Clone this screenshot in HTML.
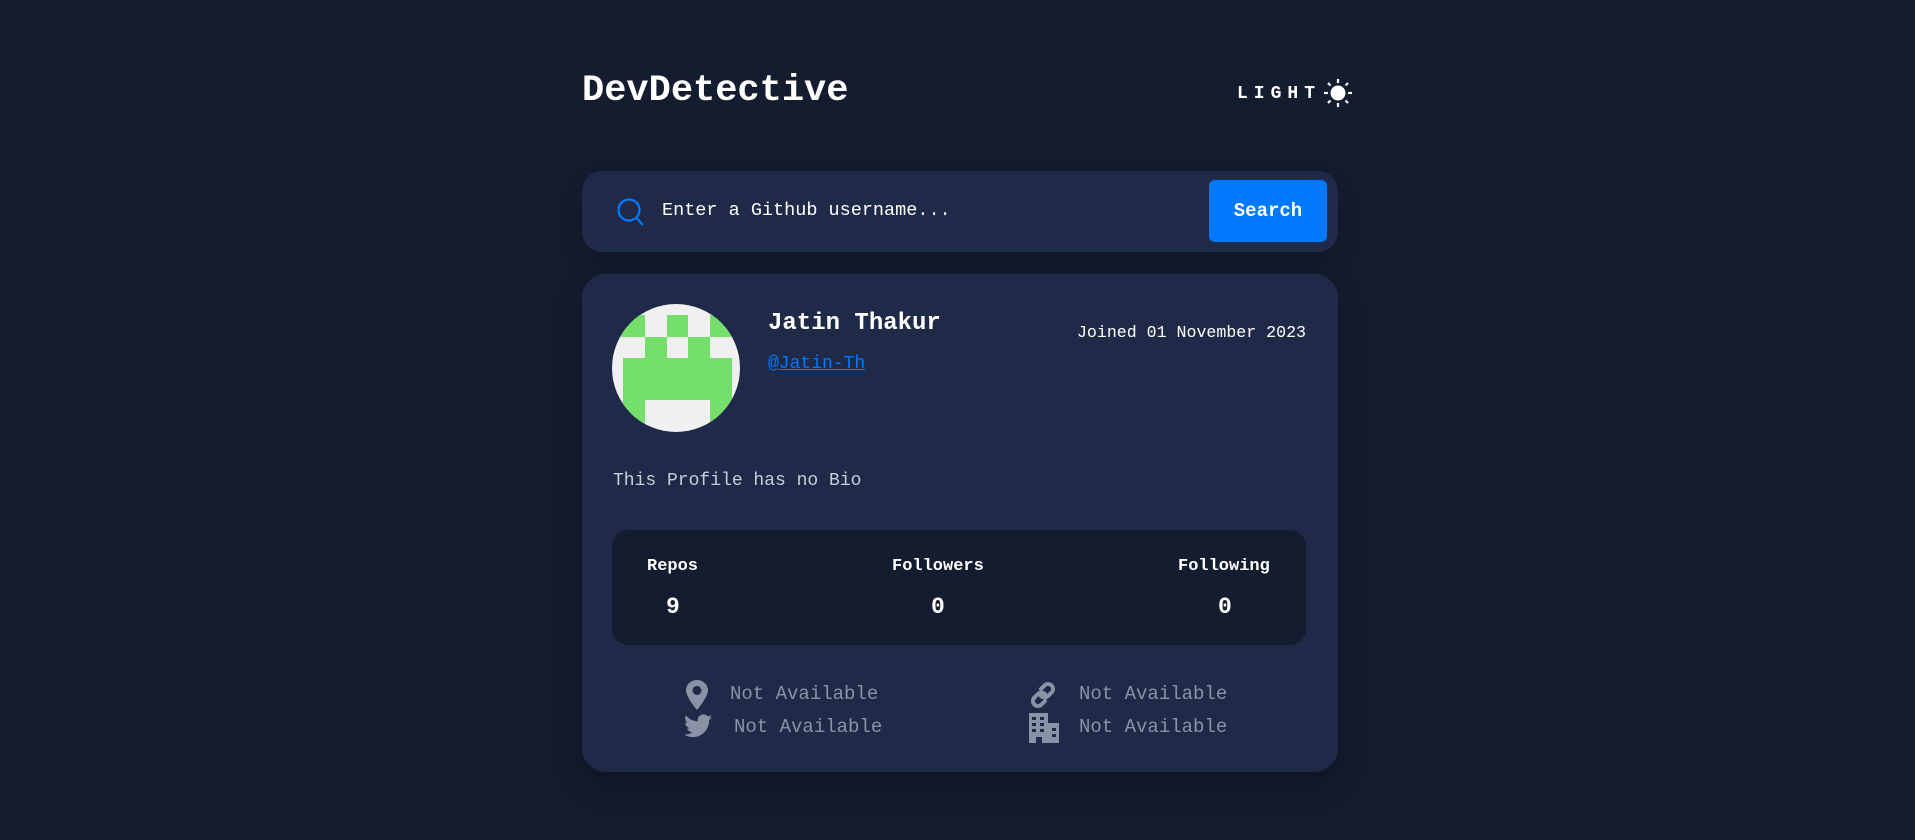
<!DOCTYPE html>
<html><head><meta charset="utf-8"><style>
*{margin:0;padding:0;box-sizing:border-box}
body{width:1915px;height:840px;background:#141c2f;font-family:"Liberation Mono",monospace;color:#fff;position:relative;overflow:hidden}
.a{position:absolute;white-space:nowrap}
.title{left:582px;top:70px;font-size:37px;font-weight:bold}
.light{left:1237px;top:84px;font-size:18px;font-weight:bold;letter-spacing:6px}
.search{left:582px;top:171px;width:756px;height:81px;background:#1f2a48;border-radius:20px;box-shadow:0 12px 25px rgba(0,0,0,.2)}
.btn{left:1209px;top:180px;width:118px;height:62px;background:#0079ff;border-radius:6px;font-weight:bold;font-size:19px;line-height:62px;text-align:center}
.card{left:582px;top:274px;width:756px;height:498px;background:#1f2a48;border-radius:24px;box-shadow:0 15px 30px rgba(0,0,0,.25)}
.stats{left:612px;top:530px;width:694px;height:115px;background:#141c2f;border-radius:16px}
.lbl{font-size:17px;font-weight:bold}
.num{font-size:23px;font-weight:bold}
.na{font-size:19px;color:#8a92a6}
</style></head><body>
<div class="a title">DevDetective</div>
<div class="a light">LIGHT</div>
<svg class="a" style="left:1323px;top:78px" width="30" height="30" viewBox="0 0 30 30"><circle cx="15" cy="15" r="7.5" fill="#fff"/><g stroke="#fff" stroke-width="2.2"><line x1="15" y1="1" x2="15" y2="5"/><line x1="15" y1="25" x2="15" y2="29"/><line x1="1" y1="15" x2="5" y2="15"/><line x1="25" y1="15" x2="29" y2="15"/><line x1="5" y1="5" x2="7.5" y2="7.5"/><line x1="22.5" y1="22.5" x2="25" y2="25"/><line x1="25" y1="5" x2="22.5" y2="7.5"/><line x1="5" y1="25" x2="7.5" y2="22.5"/></g></svg>
<div class="a search"></div>
<svg class="a" style="left:616px;top:197px" width="30" height="30" viewBox="0 0 30 30"><circle cx="13" cy="13" r="10.5" fill="none" stroke="#0079ff" stroke-width="2.2"/><line x1="20.5" y1="21" x2="27" y2="28" stroke="#0079ff" stroke-width="2.2"/></svg>
<div class="a" style="left:662px;top:200px;font-size:18.5px">Enter a Github username...</div>
<div class="a btn">Search</div>
<div class="a card"></div>
<svg class="a" style="left:612px;top:304px" width="128" height="128" viewBox="0 0 128 128"><defs><clipPath id="c"><circle cx="64" cy="64" r="64"/></clipPath></defs><g clip-path="url(#c)"><rect width="128" height="128" fill="#f0f0f0"/><g fill="#74df6b">
<rect x="0" y="11" width="33" height="22"/><rect x="55" y="11" width="21" height="22"/><rect x="98" y="11" width="30" height="22"/>
<rect x="33" y="33" width="22" height="21"/><rect x="76" y="33" width="22" height="21"/>
<rect x="11" y="54" width="109" height="42"/>
<rect x="11" y="96" width="22" height="32"/><rect x="98" y="96" width="22" height="32"/>
</g></g></svg>
<div class="a" style="left:768px;top:310px;font-size:24px;font-weight:bold">Jatin Thakur</div>
<div class="a" style="left:1306px;top:323px;font-size:16.6px;transform:translateX(-100%)">Joined 01 November 2023</div>
<div class="a" style="left:768px;top:354px;font-size:18px;color:#0079ff;text-decoration:underline">@Jatin-Th</div>
<div class="a" style="left:613px;top:471px;font-size:18px;color:#c8cdd8">This Profile has no Bio</div>
<div class="a stats"></div>
<div class="a lbl" style="left:647px;top:557px">Repos</div>
<div class="a lbl" style="left:892px;top:557px">Followers</div>
<div class="a lbl" style="left:1178px;top:557px">Following</div>
<div class="a num" style="left:666px;top:594px">9</div>
<div class="a num" style="left:931px;top:594px">0</div>
<div class="a num" style="left:1218px;top:594px">0</div>
<svg class="a" style="left:686px;top:680px" width="22" height="30" viewBox="0 0 22 30"><path d="M11 0C5 0 0 4.5 0 10.5 0 17 11 30 11 30S22 17 22 10.5C22 4.5 17 0 11 0zm0 15a4.5 4.5 0 1 1 0-9 4.5 4.5 0 0 1 0 9z" fill="#8a92a6"/></svg>
<div class="a na" style="left:730px;top:683px">Not Available</div>
<svg class="a" style="left:684px;top:714px" width="28" height="24" viewBox="0 0 24 20"><path d="M24 2.4c-.9.4-1.8.6-2.8.8 1-.6 1.8-1.6 2.2-2.7-1 .6-2 1-3.1 1.2C19.3.7 18 0 16.6 0c-2.7 0-4.9 2.2-4.9 4.9 0 .4 0 .8.1 1.1C7.7 5.8 4.1 3.9 1.7.9c-.4.7-.7 1.6-.7 2.5 0 1.7.9 3.2 2.2 4.1-.8 0-1.6-.2-2.2-.6v.1c0 2.4 1.7 4.4 3.9 4.8-.4.1-.8.2-1.3.2-.3 0-.6 0-.9-.1.6 2 2.4 3.4 4.6 3.4-1.7 1.3-3.8 2.1-6.1 2.1-.4 0-.8 0-1.2-.1 2.2 1.4 4.8 2.2 7.5 2.2 9.1 0 14-7.5 14-14v-.6c1-.7 1.8-1.6 2.5-2.5z" fill="#8a92a6"/></svg>
<div class="a na" style="left:734px;top:716px">Not Available</div>
<svg class="a" style="left:1028px;top:680px" width="30" height="30" viewBox="0 0 30 30"><g fill="none" stroke="#8a92a6" stroke-width="4" stroke-linecap="round"><path d="M13 9l4-4a5 5 0 0 1 7 7l-4 4a5 5 0 0 1-7 0"/><path d="M17 21l-4 4a5 5 0 0 1-7-7l4-4a5 5 0 0 1 7 0"/></g></svg>
<div class="a na" style="left:1079px;top:683px">Not Available</div>
<svg class="a" style="left:1029px;top:713px" width="30" height="30" viewBox="0 0 30 30"><path d="M0 0h19v30h-6v-6H7v6H0zM19 10h11v20H19z" fill="#8a92a6"/><g fill="#1f2a48"><rect x="3" y="4" width="4" height="3"/><rect x="11" y="4" width="4" height="3"/><rect x="3" y="10" width="4" height="3"/><rect x="11" y="10" width="4" height="3"/><rect x="3" y="16" width="4" height="3"/><rect x="11" y="16" width="4" height="3"/><rect x="23" y="15" width="4" height="3"/><rect x="23" y="21" width="4" height="3"/></g></svg>
<div class="a na" style="left:1079px;top:716px">Not Available</div>
</body></html>
